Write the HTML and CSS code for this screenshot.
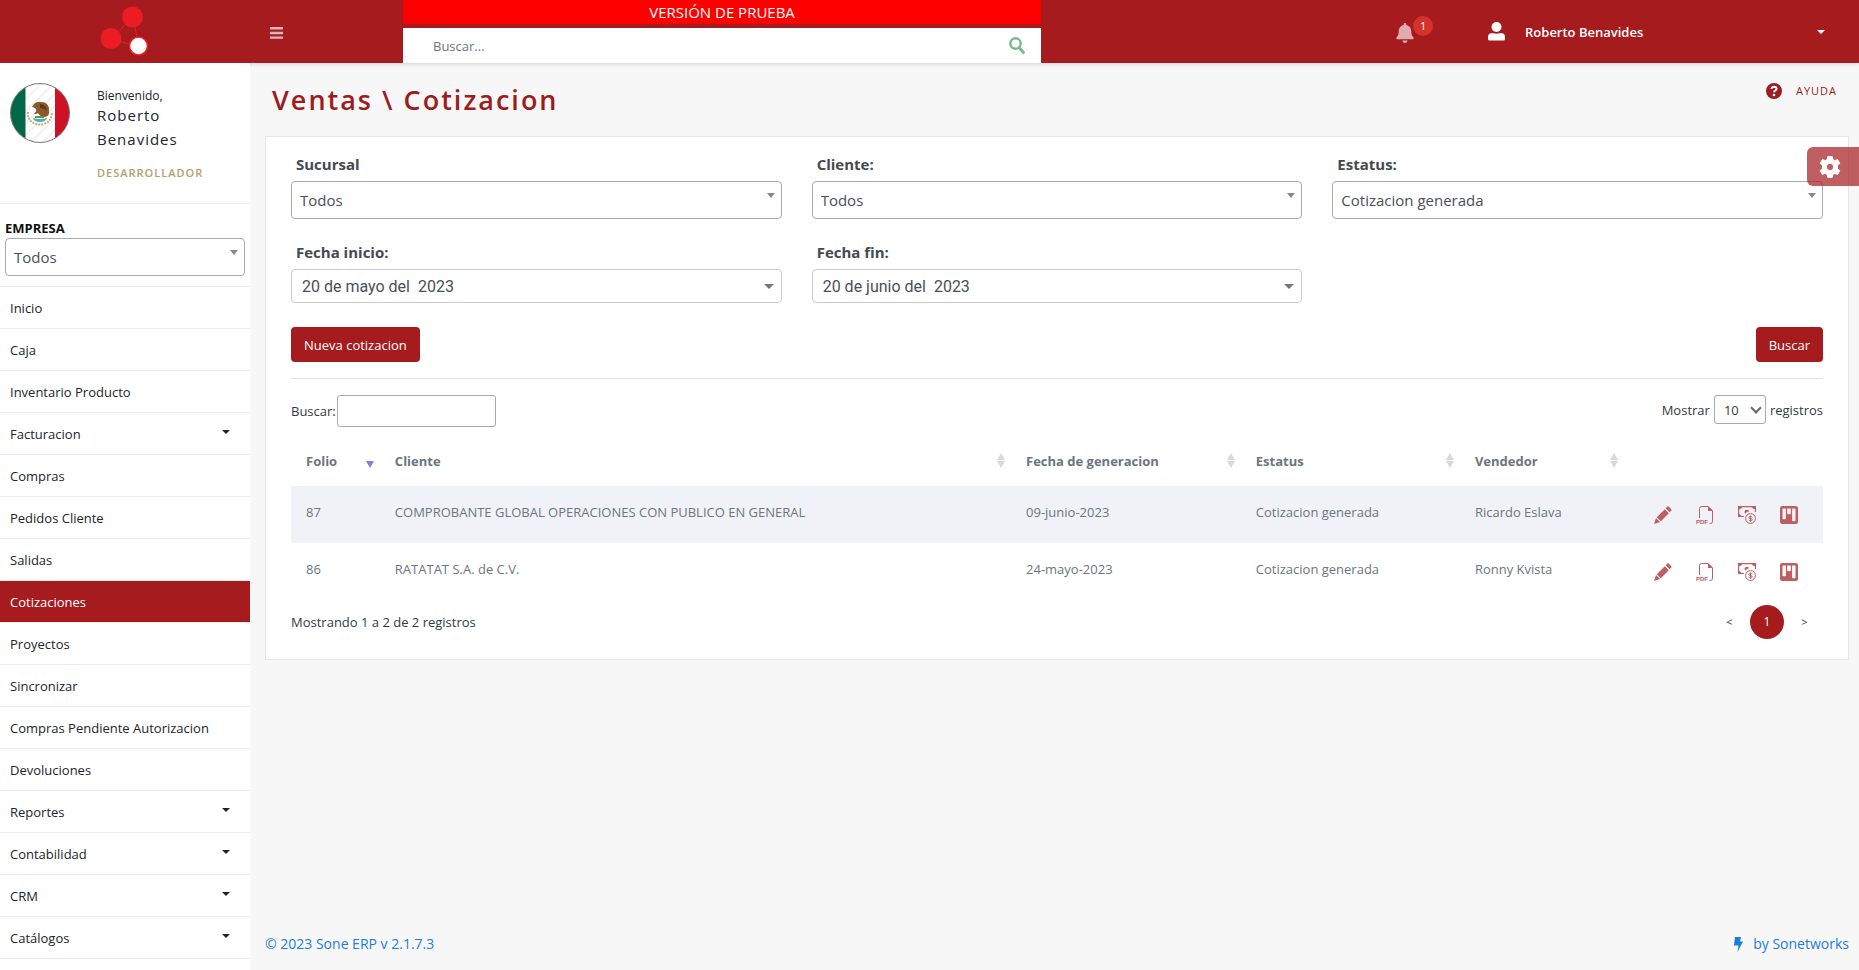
FILE: index.html
```html
<!DOCTYPE html>
<html lang="es">
<head>
<meta charset="utf-8">
<title>Ventas \ Cotizacion</title>
<link rel="stylesheet" href="styles.css">
</head>
<body>
<svg class="sprite" aria-hidden="true">
  <symbol id="i-pencil" viewBox="0 0 18 18"><path d="M0 18l2-6 4 4zM2.800 11.200l8-8 4 4-8 8zM11.700 2.300l1.700-1.700q.6-.6 1.200 0l2.800 2.800q.6.6 0 1.200l-1.700 1.700z"/></symbol>
  <symbol id="i-money" viewBox="0 0 18 18"><path fill="none" stroke="currentColor" stroke-width="1.200" d="M6 10.500H.6V.6h16.800V6"/><path d="M0 0h4.500q-.5 3-4.500 3.500zM18 0h-4.500q.5 3 4.500 3.500zM0 11V7.500q3 .5 4 3.500zM6.500 6.500a2.500 2.500 0 0 1 4.800-1.200Q8.500 5.800 7.500 7.600q-.8-.3-1-1.100z"/><circle cx="12.500" cy="12.500" r="4.900" fill="none" stroke="currentColor"/><path fill="none" stroke="currentColor" d="M14.200 11.300q-.4-.9-1.700-.9-1.600 0-1.600 1.100t1.600 1.100q1.700 0 1.700 1.100t-1.700 1.100q-1.400 0-1.700-1M12.500 9.600v5.900"/></symbol>
  <symbol id="i-board" viewBox="0 0 18 18"><path fill-rule="evenodd" d="M2.500 0h13Q18 0 18 2.500v13q0 2.500-2.500 2.500h-13Q0 18 0 15.500v-13Q0 0 2.500 0zM2.500 2.500v10q0 .8.800.8h1.800q.8 0 .8-.8v-10zM7.200 2.500v5q0 .8.800.8h2q.8 0 .8-.8v-5zM12.100 2.500v12q0 .8.800.8h1.800q.8 0 .8-.8v-12z"/></symbol>
</svg>

<header class="topbar">
  <a class="brand" href="#" aria-label="Sone ERP">
    <svg width="50" height="50" viewBox="0 0 50 50"><path d="M33 11L11 33l28 8z" fill="none" stroke="#ed1c24"/><circle cx="32.500" cy="11" r="10.500" fill="#ed1c24"/><circle cx="11" cy="32.500" r="10.500" fill="#ed1c24"/><circle cx="38.500" cy="40" r="9" fill="#fff" stroke="#ed1c24" stroke-width="1.500"/></svg>
  </a>
  <button class="menu-btn" aria-label="Menú"><svg width="13" height="12" viewBox="0 0 13 12"><path fill="currentColor" d="M0 0h13v2.400H0zM0 4.800h13v2.400H0zM0 9.400h13v2.400H0z"/></svg></button>
  <div class="center">
    <div class="trial">VERSIÓN DE PRUEBA</div>
    <form class="search">
      <input type="text" placeholder="Buscar..." aria-label="Buscar">
      <button type="button" aria-label="Buscar"><svg width="16" height="17" viewBox="0 0 16 17"><circle cx="6.500" cy="6.500" r="5.200" fill="none" stroke="currentColor" stroke-width="2.400"/><path d="M10.500 11l4 4.500" stroke="currentColor" stroke-width="2.800" stroke-linecap="round"/></svg></button>
    </form>
  </div>
  <div class="right">
    <button class="bell" aria-label="Notificaciones"><svg width="18" height="20" viewBox="0 0 448 512"><path fill="currentColor" d="M224 512c35.320 0 63.970-28.650 63.970-64H160.030c0 35.350 28.650 64 63.970 64zm215.390-149.710c-19.320-20.760-55.470-51.990-55.470-154.290 0-77.700-54.480-139.900-127.940-155.160V32c0-17.670-14.320-32-31.980-32s-31.980 14.330-31.980 32v20.840C118.560 68.100 64.080 130.300 64.080 208c0 102.300-36.150 133.530-55.470 154.290-6 6.450-8.660 14.160-8.610 21.710.11 16.400 12.980 32 32.100 32h383.800c19.120 0 32-15.600 32.100-32 .05-7.550-2.610-15.270-8.610-21.710z"/></svg><span class="badge">1</span></button>
    <button class="user"><svg width="17" height="19" viewBox="0 0 17 19"><circle cx="8.500" cy="5" r="5" fill="#fff"/><path fill="#fff" d="M0 17v-2q0-4 4.500-4 4 1.600 8 0 4.500 0 4.500 4v2q0 1.500-1.500 1.500h-14Q0 18.500 0 17z"/></svg><span>Roberto Benavides</span><i class="caret"></i></button>
  </div>
</header>

<div class="shell">
  <aside class="sidebar">
    <div class="profile">
      <svg class="flag" width="60" height="60" viewBox="0 0 60 60"><defs><clipPath id="c"><circle cx="30" cy="30" r="29.500"/></clipPath></defs><g clip-path="url(#c)"><path fill="#fff" d="M0 0h60v60H0z"/><path stroke="#f1f1f1" stroke-width="2" d="M10 22L34-2M10 34L46-2M10 46L50 6M10 58L50 18M20 60l30-30M32 60l18-18"/><path fill="#006847" d="M0 0h15.500v60H0z"/><path fill="#ce1126" d="M45 0h15v60H45z"/></g><path d="M18 29q-1 9 8 12 4 1 8 0 8-3 8-12" fill="none" stroke="#c6b07a" stroke-width="2" stroke-dasharray="2 1"/><path fill="#8a5a2b" d="M22 24q3-6 9-5 8 0 8 8 1 6-4 7-5 0-7-4-3 2-4 0 3-1 2-4-2-2-4-2z"/><path fill="#5c3a1a" d="M30 21q7 1 7 7-3-3-7-3z"/><path fill="#4bb0b8" d="M23 35q7 2 14 0-1 4-7 4t-7-4z"/><path fill="#6d8f4e" d="M25 33h9v2h-9z"/><circle cx="30" cy="30" r="29.500" fill="none" stroke="#777"/></svg>
      <div class="who">
        <span class="hello">Bienvenido,</span>
        <span class="name">Roberto Benavides</span>
        <span class="role">DESARROLLADOR</span>
      </div>
    </div>
    <div class="company">
      <label for="empresa">EMPRESA</label>
      <span class="pick"><select id="empresa"><option>Todos</option></select></span>
    </div>
    <nav class="nav">
      <a href="#">Inicio</a>
      <a href="#">Caja</a>
      <a href="#">Inventario Producto</a>
      <a href="#">Facturacion<i class="caret"></i></a>
      <a href="#">Compras</a>
      <a href="#">Pedidos Cliente</a>
      <a href="#">Salidas</a>
      <a href="#" class="active">Cotizaciones</a>
      <a href="#">Proyectos</a>
      <a href="#">Sincronizar</a>
      <a href="#">Compras Pendiente Autorizacion</a>
      <a href="#">Devoluciones</a>
      <a href="#">Reportes<i class="caret"></i></a>
      <a href="#">Contabilidad<i class="caret"></i></a>
      <a href="#">CRM<i class="caret"></i></a>
      <a href="#">Catálogos<i class="caret"></i></a>
    </nav>
  </aside>

  <main class="main">
    <div class="heading">
      <h1>Ventas \ Cotizacion</h1>
      <a class="help" href="#"><svg width="16" height="16" viewBox="0 0 16 16"><circle cx="8" cy="8" r="8" fill="currentColor"/><path d="M5.500 6q.2-2.300 2.600-2.300 2.400.1 2.400 2.100 0 1.100-1.300 1.800-1.100.6-1.100 1.700" fill="none" stroke="#fff" stroke-width="2"/><circle cx="8" cy="12" r="1.300" fill="#fff"/></svg>AYUDA</a>
    </div>

    <section class="card">
      <form class="filters">
        <div class="field"><label for="suc">Sucursal</label><span class="pick"><select id="suc"><option>Todos</option></select></span></div>
        <div class="field"><label for="cli">Cliente:</label><span class="pick"><select id="cli"><option>Todos</option></select></span></div>
        <div class="field"><label for="est">Estatus:</label><span class="pick"><select id="est"><option>Cotizacion generada</option></select></span></div>
        <div class="field"><label for="fi">Fecha inicio:</label><span class="pick date"><input id="fi" type="text" value="20 de mayo del  2023"></span></div>
        <div class="field"><label for="ff">Fecha fin:</label><span class="pick date"><input id="ff" type="text" value="20 de junio del  2023"></span></div>
      </form>
      <div class="actions"><button class="btn">Nueva cotizacion</button><button class="btn">Buscar</button></div>
      <div class="tools">
        <label class="find">Buscar:<input type="search"></label>
        <label class="length">Mostrar <span class="len"><select><option>10</option></select></span> registros</label>
      </div>
      <table class="grid">
        <colgroup><col class="c1"><col class="c2"><col class="c3"><col class="c4"><col class="c5"><col></colgroup>
        <thead><tr><th class="desc">Folio</th><th class="sort">Cliente</th><th class="sort">Fecha de generacion</th><th class="sort">Estatus</th><th class="sort">Vendedor</th><th></th></tr></thead>
        <tbody>
          <tr><td>87</td><td>COMPROBANTE GLOBAL OPERACIONES CON PUBLICO EN GENERAL</td><td>09-junio-2023</td><td>Cotizacion generada</td><td>Ricardo Eslava</td>
            <td><div class="ops"><button aria-label="Editar"><svg><use href="#i-pencil"/></svg></button><button aria-label="Descargar"><svg viewBox="0 0 18 18"><path fill="none" stroke="currentColor" d="M3.500 12V2.500q0-2 2-2H12l4.500 4.500v10.500q0 2-2 2h-1"/><path d="M12 0v5h5z"/><text x="0" y="18">PDF</text></svg></button><button aria-label="Cobrar"><svg><use href="#i-money"/></svg></button><button aria-label="Proyecto"><svg><use href="#i-board"/></svg></button></div></td></tr>
          <tr><td>86</td><td>RATATAT S.A. de C.V.</td><td>24-mayo-2023</td><td>Cotizacion generada</td><td>Ronny Kvista</td>
            <td><div class="ops"><button aria-label="Editar"><svg><use href="#i-pencil"/></svg></button><button aria-label="Descargar"><svg viewBox="0 0 18 18"><path fill="none" stroke="currentColor" d="M3.500 12V2.500q0-2 2-2H12l4.500 4.500v10.500q0 2-2 2h-1"/><path d="M12 0v5h5z"/><text x="0" y="18">PDF</text></svg></button><button aria-label="Cobrar"><svg><use href="#i-money"/></svg></button><button aria-label="Proyecto"><svg><use href="#i-board"/></svg></button></div></td></tr>
        </tbody>
      </table>
      <div class="pager">
        <span>Mostrando 1 a 2 de 2 registros</span>
        <div class="pages"><button>&lt;</button><button class="current">1</button><button>&gt;</button></div>
      </div>
    </section>

    <footer class="foot">
      <a href="#">© 2023 Sone ERP v 2.1.7.3</a>
      <a href="#"><svg width="9" height="15" viewBox="0 0 9 15"><path fill="currentColor" d="M1 0h6L6 4.500h3L3.500 15 4.500 8.500H0z"/></svg>by Sonetworks</a>
    </footer>
  </main>
</div>

<button class="gear" aria-label="Configuración"><svg width="22" height="22" viewBox="0 0 22 22"><path fill="#fff" stroke="#fff" stroke-linejoin="round" fill-rule="evenodd" d="M8.800.5h4.400l.6 3 1.900 1.100 2.900-1 2.200 3.800-2.300 2v3.200l2.300 2-2.200 3.800-2.900-1-1.900 1.100-.6 3H8.800l-.6-3-1.900-1.100-2.900 1-2.200-3.800 2.300-2V9.400l-2.300-2 2.200-3.800 2.900 1 1.900-1.100zM11 7.300a3.700 3.700 0 1 0 0 7.400 3.700 3.700 0 0 0 0-7.400z"/></svg></button>
</body>
</html>
```

FILE: styles.css
```css
* { box-sizing: border-box; }
body { margin: 0; height: 100vh; display: flex; flex-direction: column; overflow: hidden; background: #f7f7f7; color: #343a40; font: 13px/20px "Open Sans", "Noto Sans", sans-serif; }
a { color: inherit; text-decoration: none; }
button, input, select { font: inherit; color: inherit; margin: 0; }
button { border: 0; padding: 0; background: none; }
svg { display: block; }
.sprite { display: none; }
.caret { width: 0; height: 0; border: 4px solid transparent; border-top-color: currentColor; border-bottom: 0; }

.topbar { flex: none; height: 63px; display: flex; background: #a51b1e; color: #fff; box-shadow: 0 1px 4px rgba(0, 0, 0, .15); }
.brand { width: 250px; padding: 6px 0 0 100px; }
.menu-btn { width: 153px; padding: 27px 0 0 20px; align-self: flex-start; color: #dfb4b5; }
.center { flex: 1; display: flex; flex-direction: column; gap: 4px; }
.trial { height: 24px; background: #f00; text-align: center; font-size: 15px; line-height: 24px; }
.search { flex: 1; display: flex; align-items: center; background: #fff; padding: 0 16px 0 30px; }
.search input { flex: 1; border: 0; outline: 0; padding: 0; background: none; }
.search input::placeholder { color: #6c757d; }
.search button { color: #74bb8c; }
.right { flex: 0 0 44%; display: flex; padding-left: 355px; }
.bell { position: relative; align-self: flex-start; margin-top: 23px; color: #dfadaf; }
.badge { position: absolute; left: 17px; top: -7px; width: 20px; height: 20px; border-radius: 50%; background: #d5312e; color: #fff; font-size: 11px; }
.user { flex: 1; display: flex; align-items: center; gap: 20px; padding: 0 34px 0 74px; font-weight: 600; }
.user .caret { margin-left: auto; }

.shell { flex: 1; display: flex; min-height: 0; }
.sidebar { flex: none; width: 250px; background: #fff; color: #212529; }
.profile { display: flex; gap: 27px; height: 141px; padding: 20px 10px 0; border-bottom: 1px solid #ededed; }
.flag { flex: none; }
.who { display: flex; flex-direction: column; padding-top: 6px; }
.hello { font-size: 12px; line-height: 14px; }
.name { font-size: 15px; line-height: 24px; letter-spacing: 1px; }
.role { margin-top: 14px; font-size: 11px; font-weight: 600; line-height: 16px; letter-spacing: 1px; color: #b5a06c; }
.company { padding: 14px 5px 10px; border-bottom: 1px solid #ededed; }
.company label { display: block; font-weight: 700; color: #111; }
.pick { position: relative; display: block; }
.pick select, .pick input { appearance: none; display: block; width: 100%; height: 38px; padding: 0 8px; border: 1px solid #aaa; border-radius: 4px; background: #fff; color: #495057; font-size: 15px; outline: 0; }
.pick::after { content: ""; position: absolute; right: 7px; top: 12px; border: 4px solid transparent; border-top: 5px solid #888; border-bottom: 0; }
.pick.date input { height: 34px; padding: 0 10px; border-color: #ccc; font-family: Roboto, sans-serif; font-size: 16px; white-space: pre; }
.pick.date::after { right: 8px; top: 15px; border-width: 5px 5px 0; border-top-color: #777; }
.nav a { display: flex; align-items: center; justify-content: space-between; height: 42px; padding: 0 20px 0 10px; border-bottom: 1px solid #ededed; }
.nav .caret { margin-bottom: 4px; }
.nav .active { background: #a51b1e; color: #fff; }

.main { flex: 1; min-width: 0; display: flex; flex-direction: column; padding: 0 10px 0 15px; }
.heading { height: 73px; display: flex; justify-content: space-between; padding: 17px 12px 0 7px; color: #9c1c20; }
h1 { margin: 0; font-size: 27px; line-height: 40px; font-weight: 600; letter-spacing: 2px; }
.help { display: flex; align-items: center; gap: 14px; height: 20px; font-size: 11px; letter-spacing: 1px; margin-top: 1px; }
.card { background: #fff; border: 1px solid #e7e7e7; padding: 16px 25px 20px; }
.filters { display: grid; grid-template-columns: repeat(3, 1fr); gap: 22px 30px; }
.field label { display: block; padding: 0 5px; margin-bottom: 6px; line-height: 22px; font-size: 15px; font-weight: 700; color: #444a4f; }
.actions { display: flex; justify-content: space-between; padding: 24px 0 16px; border-bottom: 1px solid #e3e3e3; }
.btn { height: 35px; padding: 0 13px; border-radius: 4px; background: #a51b1e; color: #fff; }
.tools { display: flex; justify-content: space-between; align-items: flex-start; padding-top: 16px; }
.find { display: flex; align-items: center; gap: 1px; }
.find input { width: 159px; height: 32px; border: 1px solid #aaa; border-radius: 3px; outline: 0; }
.length { display: flex; align-items: center; gap: 4px; }
.len { position: relative; }
.len select { appearance: none; display: block; width: 52px; height: 29px; padding: 0 9px; border: 1px solid #aaa; border-radius: 3px; background: #fff; }
.len::after { content: ""; position: absolute; right: 6px; top: 9px; width: 6px; height: 6px; border: solid #666; border-width: 0 2px 2px 0; transform: rotate(45deg); }
.grid { width: 100%; margin-top: 9px; table-layout: fixed; border-collapse: collapse; color: #6c757d; }
.c1 { width: 5.8%; } .c2 { width: 41.2%; } .c3 { width: 15%; } .c4 { width: 14.3%; } .c5 { width: 10.7%; }
th { position: relative; height: 50px; padding: 0 15px; text-align: left; font-weight: 700; }
.sort::before, .sort::after, .desc::after { content: ""; position: absolute; right: 6px; border: 4px solid transparent; }
.sort::before { top: 17px; border-top: 0; border-bottom: 7px solid #d9d9d9; }
.sort::after { top: 25px; border-bottom: 0; border-top: 7px solid #d9d9d9; }
.desc::after { top: 25px; border-bottom: 0; border-top: 7px solid #7d83d6; }
td { height: 57px; padding: 0 15px 5px; white-space: nowrap; }
tbody tr:nth-child(odd) { background: #f1f2f8; }
.ops { display: flex; justify-content: space-between; padding: 6px 10px 0 15px; }
.ops button { color: #bd5e61; }
.ops svg { width: 18px; height: 18px; fill: currentColor; }
.ops text { font: 700 6px "Liberation Sans", sans-serif; }
.pager { display: flex; justify-content: space-between; align-items: center; margin-top: 5px; }
.pages { display: flex; align-items: center; gap: 2px; }
.pages button { width: 37px; height: 34px; font-size: 11px; }
.pages .current { width: 34px; border-radius: 50%; background: #a51b1e; color: #fff; font-size: 12px; }
.foot { margin-top: auto; padding-bottom: 16px; display: flex; justify-content: space-between; color: #1a7de0; font-size: 14px; font-weight: 500; }
.foot a { display: flex; align-items: center; gap: 10px; }
.gear { position: fixed; right: 0; top: 147px; width: 52px; height: 39px; padding-left: 12px; border-radius: 6px 0 0 6px; background: rgba(165, 27, 30, .7); }
```
